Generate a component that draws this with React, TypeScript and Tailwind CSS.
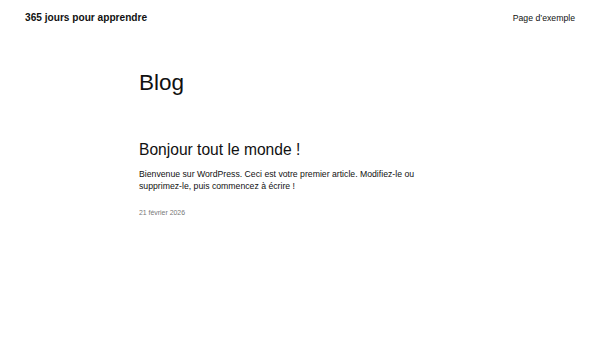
import React from 'react';

const App: React.FC = () => {
  return (
    <div className="min-h-[338px] bg-white text-[#111] font-['Liberation_Sans',Arial,sans-serif]">
      <header className="flex items-center justify-between px-[25px] pt-[12px]">
        <a className="text-[10.15px] font-bold leading-[12px]">365 jours pour apprendre</a>
        <nav className="text-[8.7px] leading-[12px]">Page d’exemple</nav>
      </header>

      <main className="mx-auto w-[322px] pt-[46px]">
        <h1 className="text-[22.5px] leading-[26px]">Blog</h1>

        <article className="mt-[44px]">
          <h2 className="text-[15.6px] leading-[20px]">Bonjour tout le monde !</h2>
          <p className="mt-[8px] max-w-[292px] text-[8.7px] leading-[12px]">
            Bienvenue sur WordPress. Ceci est votre premier article. Modifiez-le ou supprimez-le, puis commencez à écrire !
          </p>
          <p className="mt-[16px] text-[6.9px] leading-[9px] text-[#777]">21 février 2026</p>
        </article>
      </main>
    </div>
  );
};

export default App;
